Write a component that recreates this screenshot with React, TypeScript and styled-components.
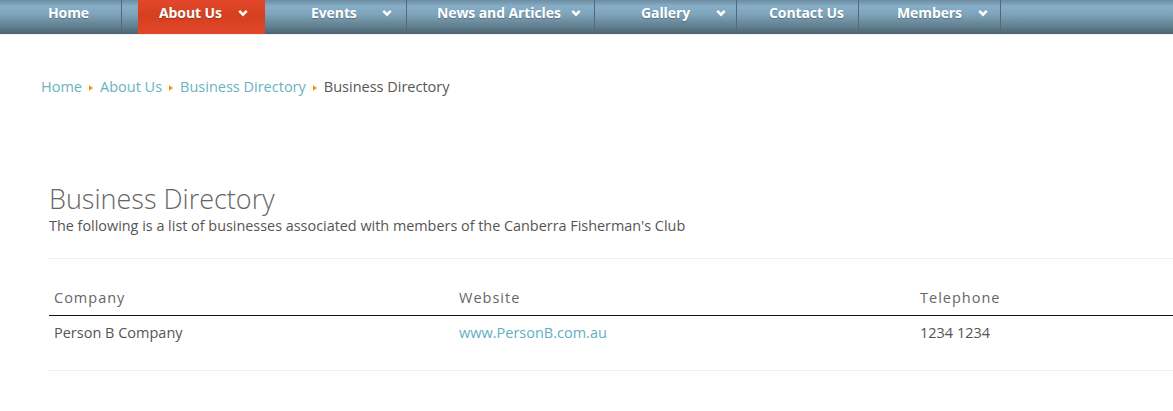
import React, {FunctionComponent} from 'react';
import styled, {createGlobalStyle} from 'styled-components';

const GlobalStyle = createGlobalStyle`
    html, body {
        margin: 0;
        padding: 0;
        background: #ffffff;
        overflow: hidden;
    }

    body {
        font-family: 'Open Sans', 'Liberation Sans', sans-serif;
        color: #555555;
    }
`;

const Page = styled.div`
    width: 1173px;
    height: 411px;
    overflow: hidden;
    background: #ffffff;
`;

const NavBar = styled.nav`
    display: flex;
    height: 34px;
    background: linear-gradient(
        to bottom,
        #6d8ca0 0px,
        #86aec7 6px,
        #7fa5bc 14px,
        #62808f 26px,
        #4b6474 34px
    );
    box-shadow: 0 1px 1px rgba(0, 0, 0, 0.06);
`;

const NavItem = styled.div<{$width: number; $pad: number; $gap: number; $active?: boolean; $inset?: number}>`
    display: flex;
    align-items: center;
    gap: ${({$gap}) => $gap}px;
    box-sizing: border-box;
    width: ${({$width}) => $width}px;
    margin-left: ${({$inset}) => $inset ?? 0}px;
    height: 34px;
    padding: 0 0 8px ${({$pad}) => $pad}px;
    border-right: ${({$active}) => ($active ? 'none' : '1px solid #4f6a7a')};
    background: ${({$active}) =>
        $active ? 'linear-gradient(to bottom, #e2472b 0px, #d4401f 16px, #e2472c 34px)' : 'transparent'};
    color: #ffffff;
    font-family: 'Open Sans', 'Liberation Sans', sans-serif;
    font-weight: 700;
    font-size: 14px;
    line-height: 18px;
    letter-spacing: -0.1px;
    text-shadow: 0 1px 1px rgba(0, 0, 0, 0.25);
    white-space: nowrap;
`;

const Chevron: FunctionComponent = () => (
    <svg width="10" height="8" viewBox="0 0 10 8" aria-hidden="true">
        <path d="M1.3 1.8 L5 5.6 L8.7 1.8" fill="none" stroke="#ffffff" strokeWidth="2.5" />
    </svg>
);

const Content = styled.main`
    padding: 0 0 0 41px;
`;

const Breadcrumb = styled.div`
    display: flex;
    align-items: center;
    gap: 6px;
    margin-top: 42px;
    height: 20px;
    font-size: 14.5px;
    font-family: 'Open Sans', 'Liberation Sans', sans-serif;
`;

const Crumb = styled.span<{$current?: boolean}>`
    color: ${({$current}) => ($current ? '#555555' : '#6ab3c3')};
`;

const CrumbArrow = styled.span`
    width: 0;
    height: 0;
    margin: 4px 1px 0 1px;
    border-top: 3.5px solid transparent;
    border-bottom: 3.5px solid transparent;
    border-left: 4px solid #f39a1f;
`;

const Section = styled.section`
    margin-top: 86px;
    margin-left: 8px;
    width: 1300px;
`;

const Title = styled.h1`
    margin: 0;
    font-family: 'Open Sans', 'Liberation Sans', sans-serif;
    font-weight: 300;
    font-size: 27px;
    line-height: 34px;
    color: #666666;
`;

const Subtitle = styled.p`
    margin: 0;
    font-size: 14.4px;
    line-height: 20px;
    color: #555555;
    padding-bottom: 22px;
    border-bottom: 1px solid #eeeeee;
`;

const Table = styled.div`
    margin-top: 29px;
    border-bottom: 1px solid #eeeeee;
`;

const Row = styled.div<{$header?: boolean}>`
    display: grid;
    grid-template-columns: 405px 461px 1fr;
    border-bottom: ${({$header}) => ($header ? '1px solid #111111' : 'none')};
    padding: ${({$header}) => ($header ? '0 0 7px' : '7px 0 27px')};
`;

const Cell = styled.div<{$header?: boolean; $link?: boolean}>`
    padding-left: 5px;
    font-size: 14.5px;
    line-height: 20px;
    letter-spacing: ${({$header}) => ($header ? '1px' : '0')};
    color: ${({$header, $link}) => ($link ? '#5fb0c2' : $header ? '#666666' : '#555555')};
`;

const navItems = [
    {label: 'Home', width: 122, pad: 48, gap: 0},
    {label: 'About Us', width: 127, pad: 21, gap: 16, dropdown: true, active: true, inset: 16},
    {label: 'Events', width: 142, pad: 46, gap: 25, dropdown: true},
    {label: 'News and Articles', width: 188, pad: 30, gap: 10, dropdown: true},
    {label: 'Gallery', width: 142, pad: 46, gap: 26, dropdown: true},
    {label: 'Contact Us', width: 122, pad: 32, gap: 0},
    {label: 'Members', width: 142, pad: 38, gap: 16, dropdown: true}
];

const App: FunctionComponent = () => (
    <Page>
        <GlobalStyle />
        <NavBar>
            {navItems.map(item => (
                <NavItem
                    key={item.label}
                    $width={item.width}
                    $pad={item.pad}
                    $gap={item.gap}
                    $active={item.active}
                    $inset={item.inset}
                >
                    <span>{item.label}</span>
                    {item.dropdown && <Chevron />}
                </NavItem>
            ))}
        </NavBar>
        <Content>
            <Breadcrumb>
                <Crumb>Home</Crumb>
                <CrumbArrow />
                <Crumb>About Us</Crumb>
                <CrumbArrow />
                <Crumb>Business Directory</Crumb>
                <CrumbArrow />
                <Crumb $current>Business Directory</Crumb>
            </Breadcrumb>
            <Section>
                <Title>Business Directory</Title>
                <Subtitle>The following is a list of businesses associated with members of the Canberra Fisherman's Club</Subtitle>
                <Table>
                    <Row $header>
                        <Cell $header>Company</Cell>
                        <Cell $header>Website</Cell>
                        <Cell $header>Telephone</Cell>
                    </Row>
                    <Row>
                        <Cell>Person B Company</Cell>
                        <Cell $link>www.PersonB.com.au</Cell>
                        <Cell>1234 1234</Cell>
                    </Row>
                </Table>
            </Section>
        </Content>
    </Page>
);

export default App;
